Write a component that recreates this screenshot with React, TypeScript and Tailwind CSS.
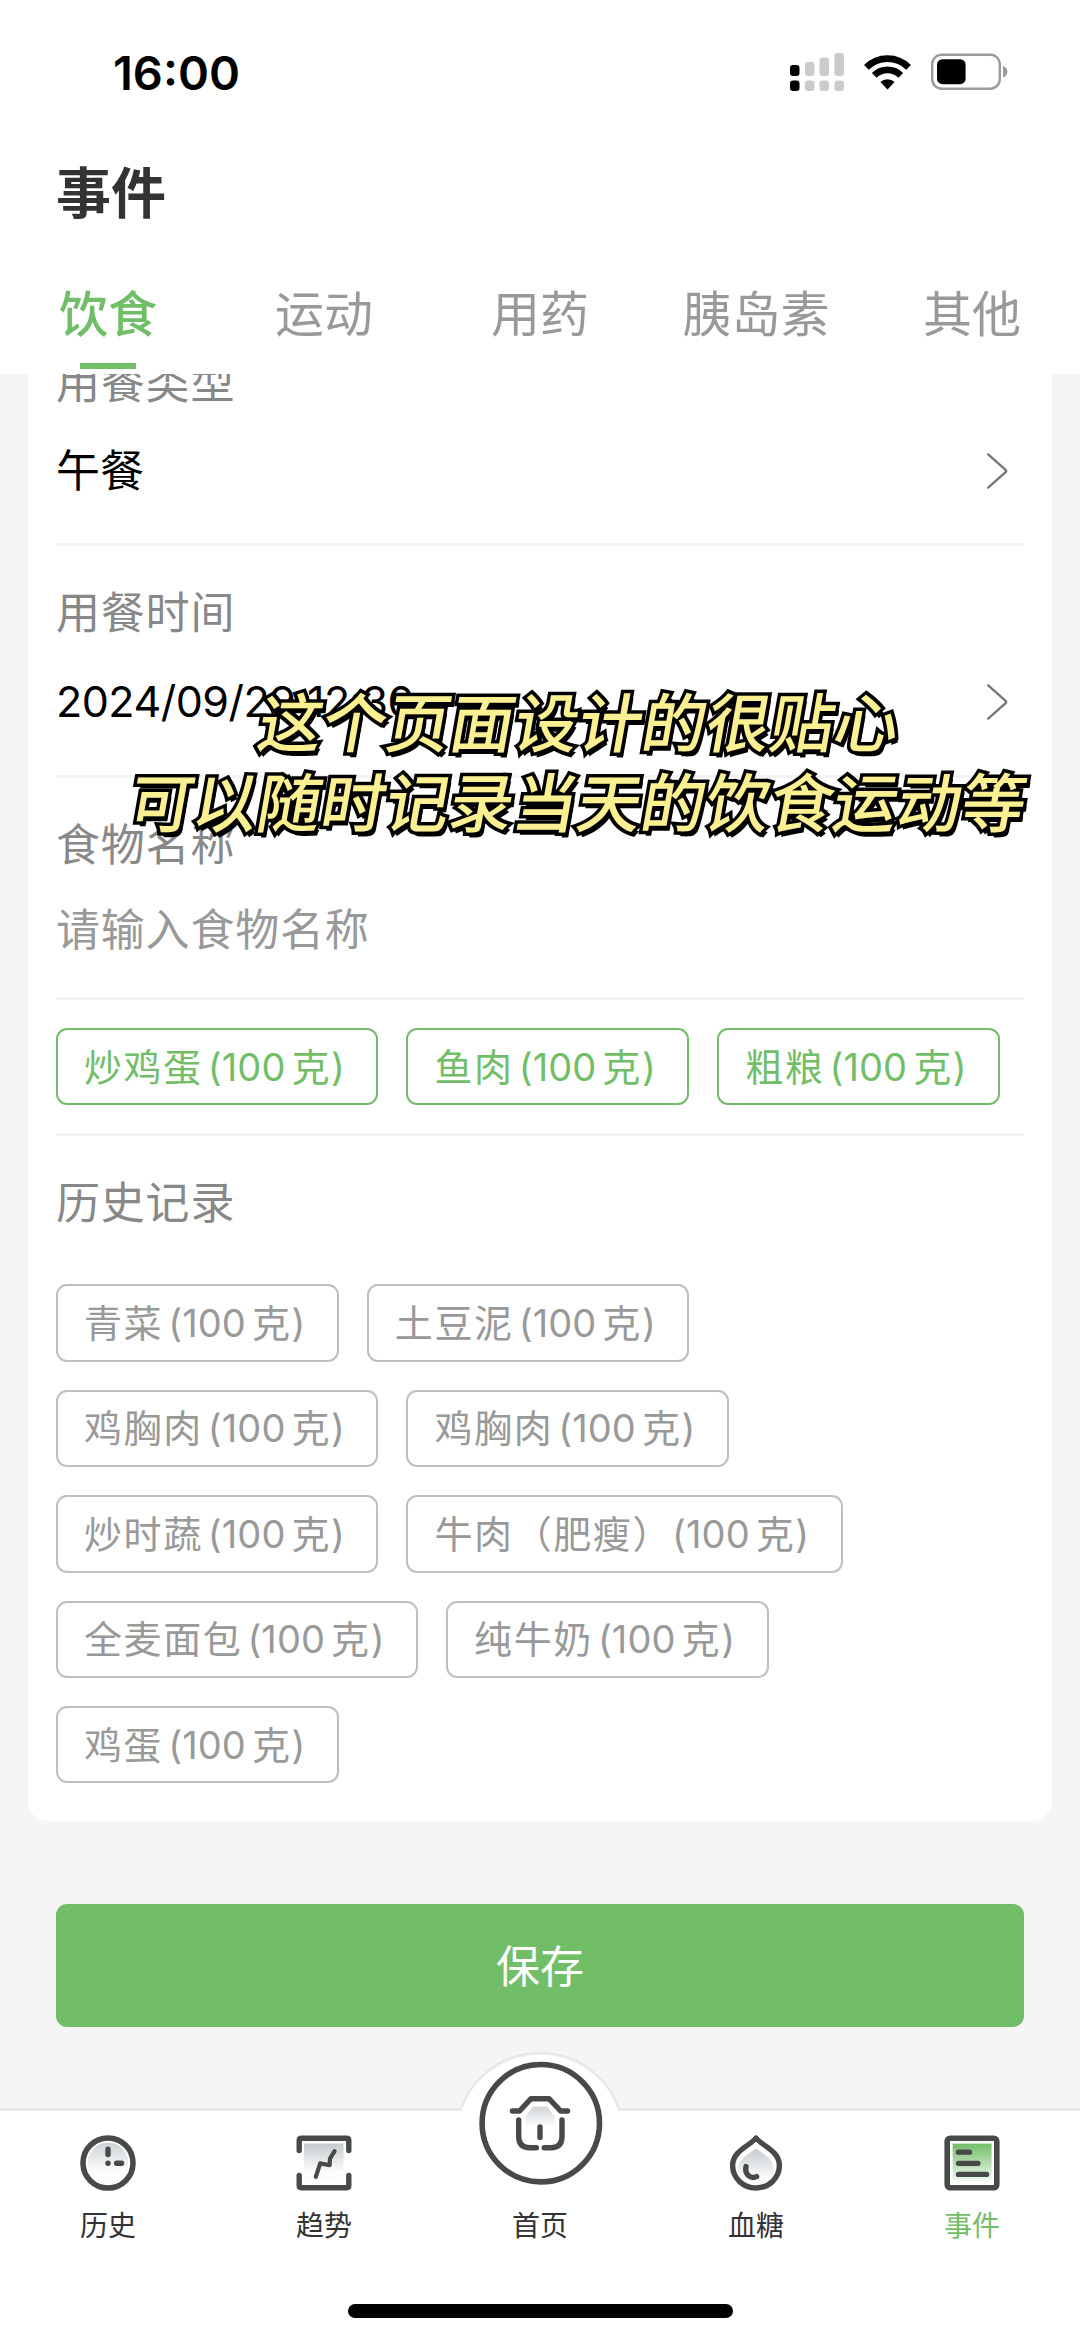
import React from 'react';
import { clsx } from 'clsx';

const tabs = ['饮食', '运动', '用药', '胰岛素', '其他'];

const currentFoods = ['炒鸡蛋', '鱼肉', '粗粮'];

const historyFoods = [
  '青菜',
  '土豆泥',
  '鸡胸肉',
  '鸡胸肉',
  '炒时蔬',
  '牛肉（肥瘦）',
  '全麦面包',
  '纯牛奶',
  '鸡蛋',
];

const SignalIcon = () => (
  <svg width="55" height="40" viewBox="0 0 55 40">
    <rect x="0" y="13" width="9.5" height="11" rx="3" fill="#000" />
    <rect x="0" y="28.5" width="9.5" height="10.5" rx="3" fill="#000" />
    <g fill="#cbcbcb">
      <rect x="15" y="10" width="9.5" height="14" rx="3" />
      <rect x="29.5" y="5.5" width="9.5" height="18.5" rx="3" />
      <rect x="44.5" y="1" width="9.5" height="23" rx="3" />
      <rect x="15" y="28.5" width="9.5" height="10.5" rx="3" />
      <rect x="29.5" y="28.5" width="9.5" height="10.5" rx="3" />
      <rect x="44.5" y="28.5" width="9.5" height="10.5" rx="3" />
    </g>
  </svg>
);

const WifiIcon = () => (
  <svg width="47" height="36" viewBox="0 0 47 36">
    <g fill="none" stroke="#000" strokeWidth="6.6">
      <path d="M2.4 13.4A29.8 29.8 0 0 1 44.6 13.4" />
      <path d="M10.2 21.4A18.8 18.8 0 0 1 36.8 21.4" />
    </g>
    <path d="M23.5 35.4L16.4 28.1A10.2 10.2 0 0 1 30.6 28.1Z" fill="#000" />
  </svg>
);

const BatteryIcon = () => (
  <svg width="77" height="38" viewBox="0 0 77 38">
    <rect x="1.2" y="1.7" width="67.6" height="34" rx="9.5" fill="none" stroke="#9b9b9b" strokeWidth="2.4" />
    <rect x="6" y="6.2" width="28.6" height="25" rx="5.5" fill="#000" />
    <path d="M72 13v11.6c3-1 4.4-3.2 4.4-5.8s-1.4-4.8-4.4-5.8z" fill="#9b9b9b" />
  </svg>
);

const ArrowIcon = () => (
  <svg width="24" height="40" viewBox="0 0 24 40" className="mr-[14px]">
    <path
      d="M2.2 3.4L19.6 18.9Q20.8 20 19.6 21.1L2.2 36.6"
      fill="none"
      stroke="#777"
      strokeWidth="2.4"
      strokeLinecap="round"
    />
  </svg>
);

const HistoryIcon = () => (
  <svg width="56" height="56" viewBox="0 0 56 56">
    <defs>
      <linearGradient id="historyFill" x1="0" y1="0" x2="0" y2="1">
        <stop offset="0" stopColor="#ced3d6" />
        <stop offset="0.7" stopColor="#fcfcfd" />
      </linearGradient>
    </defs>
    <circle cx="28" cy="28" r="20.5" fill="url(#historyFill)" />
    <circle cx="28" cy="28" r="25" fill="none" stroke="#484a4a" strokeWidth="5.6" />
    <g stroke="#484a4a" strokeWidth="5.4" strokeLinecap="round">
      <path d="M28 14.3v5.2M36.6 28.3h5" />
      <path d="M28 28.3h.01" />
    </g>
  </svg>
);

const TrendIcon = () => (
  <svg width="56" height="56" viewBox="0 0 56 56">
    <defs>
      <linearGradient id="trendFill" x1="0" y1="0" x2="0" y2="1">
        <stop offset="0" stopColor="#c6cbcf" />
        <stop offset="0.8" stopColor="#fdfdfd" />
      </linearGradient>
    </defs>
    <rect x="8" y="8.5" width="39.5" height="36" fill="url(#trendFill)" />
    <g fill="none" stroke="#484a4a" strokeWidth="5.4" strokeLinecap="round" strokeLinejoin="round">
      <path d="M3.2 15.6V5.4Q3.2 3.2 5.4 3.2H50.6Q52.8 3.2 52.8 5.4V15.6" />
      <path d="M3.2 40.4V50.6Q3.2 52.8 5.4 52.8H50.6Q52.8 52.8 52.8 50.6V40.4" />
      <path d="M19.8 41.8L24.2 28.4L33.6 30.2L34 23.6L38.6 16.2" strokeWidth="4.2" />
    </g>
  </svg>
);

const DropIcon = () => (
  <svg width="56" height="56" viewBox="0 0 56 56">
    <defs>
      <linearGradient id="dropFill" x1="0" y1="0" x2="0" y2="1">
        <stop offset="0" stopColor="#c6cbcf" />
        <stop offset="0.8" stopColor="#fcfcfd" />
      </linearGradient>
    </defs>
    <path d="M28 13.5C22 18 10 24 10 33.5A18 17 0 0 0 46 33.5C46 24 34 18 28 13.5Z" fill="url(#dropFill)" />
    <g fill="none" stroke="#484a4a" strokeLinecap="round" strokeLinejoin="round">
      <path
        d="M28 3C22.5 10.5 4.6 15.6 4.6 30.6A23.4 22.4 0 0 0 51.4 30.6C51.4 15.6 33.5 10.5 28 3Z"
        strokeWidth="5.4"
      />
      <path d="M18 31.6C16.4 38.5 22 44.6 28.6 41.6" strokeWidth="5.4" />
    </g>
  </svg>
);

const EventIcon = () => (
  <svg width="56" height="56" viewBox="0 0 56 56">
    <defs>
      <linearGradient id="eventFill" x1="0" y1="0" x2="0" y2="1">
        <stop offset="0" stopColor="#72be68" />
        <stop offset="1" stopColor="#f4faf3" />
      </linearGradient>
    </defs>
    <rect x="3.2" y="3.2" width="49.6" height="49.6" rx="3" fill="#fff" stroke="#484a4a" strokeWidth="5.6" />
    <rect x="8.6" y="8.6" width="39" height="38" fill="url(#eventFill)" />
    <path
      d="M14.4 17.2h11.2M14.4 28.3h19.6M14.4 39.4h28.2"
      stroke="#484a4a"
      strokeWidth="5.2"
      strokeLinecap="round"
    />
  </svg>
);

const HomeIcon = () => (
  <svg width="126" height="126" viewBox="0 0 126 126">
    <defs>
      <linearGradient id="homeFill" x1="0" y1="0" x2="0" y2="1">
        <stop offset="0" stopColor="#d0d5d8" />
        <stop offset="1" stopColor="#fcfcfd" />
      </linearGradient>
    </defs>
    <circle cx="62.8" cy="63.2" r="58.7" fill="#fff" stroke="#484a4a" strokeWidth="5.6" />
    <path d="M55 46.7H69.5L76.5 56V66H47.5V56Z" fill="url(#homeFill)" />
    <g fill="none" stroke="#484a4a" strokeWidth="5.4" strokeLinecap="round" strokeLinejoin="round">
      <path d="M34.4 51H41.6L53 38.7H71L82.6 51H89.6" />
      <path d="M40.7 60V76.5Q40.7 87.7 52 87.7H58.4" />
      <path d="M84 60V76.5Q84 87.7 72.7 87.7H66.2" />
      <path d="M62 67V77.4" />
    </g>
  </svg>
);

const navItems = [
  { label: '历史', icon: <HistoryIcon /> },
  { label: '趋势', icon: <TrendIcon /> },
  { label: '首页', icon: null },
  { label: '血糖', icon: <DropIcon /> },
  { label: '事件', icon: <EventIcon />, active: true },
];

interface FoodChipProps {
  name: string;
  active?: boolean;
}

const FoodChip: React.FC<FoodChipProps> = ({ name, active }) => (
  <button
    className={clsx(
      'flex h-[77.4px] items-center rounded-[11px] border-2 pr-[31.5px] pl-[26px] text-[38px] leading-none tracking-[1.6px] whitespace-nowrap',
      active ? 'border-[#74bc6b] text-[#72be68]' : 'border-[#bfbfbf] text-[#999]',
    )}
  >
    <span>{name}</span>
    <span className={clsx('tracking-[0.1px]', !name.endsWith('）') && 'ml-[5px]')}>(100</span>
    <span className="ml-[6px]">克</span>
    <span className="tracking-normal">)</span>
  </button>
);

const Divider = () => <div className="h-[3px] bg-[#f3f3f3]" />;

export default function App() {
  return (
    <div className="relative flex h-[2340px] w-[1080px] flex-col overflow-hidden bg-[#f5f5f5] font-['Inter','Noto_Sans_CJK_SC',sans-serif]">
      <header className="h-[374px] shrink-0 bg-white">
        <div className="flex h-[144px] items-center justify-between pr-[72px] pl-[113px]">
          <div className="text-[47px] leading-none font-semibold text-black">16:00</div>
          <div className="flex items-center">
            <SignalIcon />
            <div className="ml-[19px]">
              <WifiIcon />
            </div>
            <div className="ml-[20px]">
              <BatteryIcon />
            </div>
          </div>
        </div>
        <h1 className="h-[96px] pl-[56px] text-[55px] leading-[98px] font-bold text-[#333]">事件</h1>
        <div className="grid grid-cols-5">
          {tabs.map((tab, i) => (
            <div key={tab} className="flex flex-col items-center">
              <span
                className={clsx(
                  'h-[123px] pt-[13px] text-[49px] leading-[123px]',
                  i === 0 ? 'font-medium text-[#72be68]' : 'text-[#999]',
                )}
              >
                {tab}
              </span>
              {i === 0 && <span className="h-1.5 w-[56px] bg-[#72be68]" />}
            </div>
          ))}
        </div>
      </header>

      <main className="flex-1 overflow-hidden">
        <section className="mx-[28px] h-[1447px] rounded-b-[20px] bg-white px-[28px] text-[44px] tracking-[0.8px]">
          {/* first row is scrolled halfway under the header */}
          <div className="flex h-[169px] flex-col">
            <div className="-mt-[23px] h-[64px] leading-[64px] text-[#888]">用餐类型</div>
            <div className="flex h-[111px] items-center justify-between text-black">
              <span className="tracking-normal">午餐</span>
              <ArrowIcon />
            </div>
          </div>
          <Divider />
          <div className="h-[229px] pt-[35px]">
            <div className="h-[64px] leading-[64px] text-[#888]">用餐时间</div>
            <div className="flex h-[113px] items-center justify-between text-black">
              <span className="text-[43px] tracking-[-0.5px]">2024/09/29 12:30</span>
              <ArrowIcon />
            </div>
          </div>
          <Divider />
          <div className="h-[219px] pt-[35px]">
            <div className="h-[64px] leading-[64px] text-[#888]">食物名称</div>
            <div className="h-[107px] leading-[107px] text-[#999]">请输入食物名称</div>
          </div>
          <Divider />
          <div className="flex gap-[28px] py-[28px]">
            {currentFoods.map((food) => (
              <FoodChip key={food} name={food} active />
            ))}
          </div>
          <Divider />
          <div className="h-[148px] pt-[35px] leading-[64px] text-[#888]">历史记录</div>
          <div className="flex flex-wrap gap-[28px]">
            {historyFoods.map((food, i) => (
              <FoodChip key={i} name={food} />
            ))}
          </div>
        </section>
        <button className="mx-[56px] mt-[83px] block h-[123px] w-[968px] rounded-[11px] bg-[#72be68] pt-[2px] text-[44px] text-white">
          保存
        </button>
      </main>

      <nav className="relative h-[232px] shrink-0 border-t-3 border-[#e8e8e8] bg-white">
        {/* raised notch behind the home button */}
        <svg width="168" height="62" viewBox="0 0 168 62" className="absolute -top-[60px] left-[456px]">
          <path d="M4.4 62A83.6 83.6 0 0 1 163.6 62Z" fill="#fff" />
          <path d="M4.4 60A83.6 83.6 0 0 1 163.6 60" fill="none" stroke="#e8e8e8" strokeWidth="2.4" />
        </svg>
        <div className="absolute -top-[51px] left-[478px]">
          <HomeIcon />
        </div>
        <div className="grid grid-cols-5 pt-[24px]">
          {navItems.map((item) => (
            <div key={item.label} className="flex flex-col items-center">
              <div className="h-[56px]">{item.icon}</div>
              <span
                className={clsx(
                  'mt-[14px] text-[28px] leading-[42px]',
                  item.active ? 'text-[#72be68]' : 'text-[#333]',
                )}
              >
                {item.label}
              </span>
            </div>
          ))}
        </div>
        <div className="absolute bottom-[22px] left-[348px] h-[14px] w-[385px] rounded-full bg-black" />
      </nav>

      {/* caption laid over the form */}
      <div className="absolute top-[684px] left-[125px] w-[920px] -skew-x-[10deg] text-center text-[64px] leading-[80px] font-medium whitespace-nowrap text-[#fbf091] [-webkit-text-stroke:7px_#000] [paint-order:stroke_fill] [text-shadow:2px_3px_0_#000,4px_5px_0_#000]">
        <div className="-translate-x-[13px]">这个页面设计的很贴心</div>
        <div>可以随时记录当天的饮食运动等</div>
      </div>
    </div>
  );
}
